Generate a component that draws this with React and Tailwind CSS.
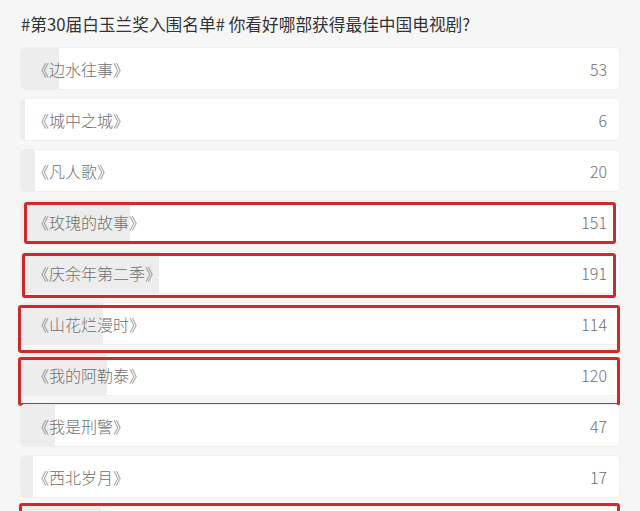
const font = { fontFamily: '"Noto Sans CJK SC", "Noto Sans", sans-serif' };

const TOTAL = 830;

// mark: hand-drawn red annotation box, offsets relative to the row
const options = [
  { name: "《边水往事》", votes: 53 },
  { name: "《城中之城》", votes: 6 },
  { name: "《凡人歌》", votes: 20 },
  { name: "《玫瑰的故事》", votes: 151, mark: "top-[1px] -bottom-[2px] left-[3px] right-[3px]" },
  { name: "《庆余年第二季》", votes: 191, mark: "top-[1px] -bottom-[5px] left-[1px] right-[3px]" },
  { name: "《山花烂漫时》", votes: 114, mark: "top-[2px] -bottom-[9px] -left-[3px] -right-[1px]" },
  { name: "《我的阿勒泰》", votes: 120, mark: "top-[3px] -bottom-[11px] -left-[3px] -right-[1px]" },
  { name: "《我是刑警》", votes: 47 },
  { name: "《西北岁月》", votes: 17 },
  { name: "《小巷人家》", votes: 111, mark: "-top-[4px] -bottom-[4px] -left-[2px] -right-[1px]" },
];

function OptionRow({ name, votes, mark }) {
  return (
    <div className="relative h-[41px] shrink-0 rounded-[4px] bg-white shadow-[0_0_0_1px_#efefef]">
      <div
        className="absolute inset-y-0 left-0 rounded-l-[4px] bg-[#ededed]"
        style={{ width: `${(votes / TOTAL) * 100}%` }}
      />
      <div className="relative flex h-full items-center justify-between px-[12px] text-[16px] font-light text-[#707070]">
        <span>{name}</span>
        <span>{votes}</span>
      </div>
      {mark && (
        <div className={`pointer-events-none absolute rounded-[3px] border-[3px] border-[#cf2a2a] ${mark}`} />
      )}
    </div>
  );
}

export default function App() {
  return (
    <div className="h-[511px] w-[640px] overflow-hidden bg-[#f6f6f6]" style={font}>
      <div className="px-[21px] pt-[13px]">
        <h1 className="text-[16.7px] leading-[22px] text-[#333]">
          #第30届白玉兰奖入围名单# 你看好哪部获得最佳中国电视剧?
        </h1>
        <div className="mt-[13px] flex flex-col gap-[10px]">
          {options.map((o) => (
            <OptionRow key={o.name} {...o} />
          ))}
        </div>
      </div>
    </div>
  );
}
